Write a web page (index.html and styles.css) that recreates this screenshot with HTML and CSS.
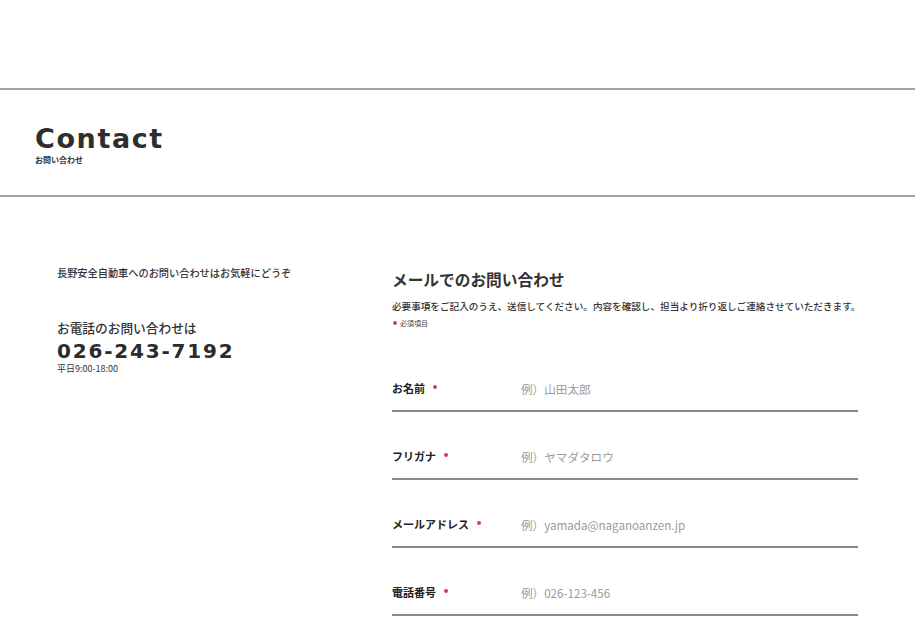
FILE: index.html
```html
<!DOCTYPE html>
<html lang="ja">
<head>
<meta charset="utf-8">
<title>Contact</title>
<link rel="stylesheet" href="styles.css">
</head>
<body>
<header class="site-header"></header>
<section class="hero">
  <h1 class="hero-title">Contact</h1>
  <p class="hero-sub">お問い合わせ</p>
</section>
<main class="contact">
  <div class="contact-info">
    <p class="lead">長野安全自動車へのお問い合わせはお気軽にどうぞ</p>
    <p class="tel-label">お電話のお問い合わせは</p>
    <p class="tel-number">026-243-7192</p>
    <p class="tel-hours">平日9:00-18:00</p>
  </div>
  <div class="contact-form">
    <h2 class="form-title">メールでのお問い合わせ</h2>
    <p class="form-desc">必要事項をご記入のうえ、送信してください。内容を確認し、担当より折り返しご連絡させていただきます。</p>
    <p class="form-note"><span class="req"></span>必須項目</p>
    <form class="form">
      <label class="row">
        <span class="row-label">お名前<span class="req"></span></span>
        <input class="row-input" type="text" placeholder="例）山田太郎">
      </label>
      <label class="row">
        <span class="row-label">フリガナ<span class="req"></span></span>
        <input class="row-input" type="text" placeholder="例）ヤマダタロウ">
      </label>
      <label class="row">
        <span class="row-label">メールアドレス<span class="req"></span></span>
        <input class="row-input" type="text" placeholder="例）yamada@naganoanzen.jp">
      </label>
      <label class="row">
        <span class="row-label">電話番号<span class="req"></span></span>
        <input class="row-input" type="text" placeholder="例）026-123-456">
      </label>
    </form>
  </div>
</main>
</body>
</html>
```
FILE: styles.css
```css
* { box-sizing: border-box; }
html, body { margin: 0; padding: 0; background: #fff; }
body {
  font-family: "Noto Sans CJK JP", "Noto Sans", sans-serif;
  color: #333;
  width: 915px;
  overflow: hidden;
}
p, h1, h2 { margin: 0; }

.site-header { height: 88px; }

.hero {
  border-top: 2px solid #a3a3a3;
  border-bottom: 2px solid #a3a3a3;
  padding: 35px 0 31px 35px;
}
.hero-title {
  font-family: "DejaVu Sans", sans-serif;
  font-weight: 700;
  font-size: 27px;
  line-height: 27px;
  letter-spacing: 1.6px;
  color: #2e2e2e;
}
.hero-sub {
  margin-top: 4px;
  font-size: 8px;
  line-height: 8px;
  font-weight: 700;
  color: #333;
}

.contact {
  display: grid;
  grid-template-columns: 335px 466px;
  padding: 68px 0 0 57px;
}

.lead {
  font-size: 10.2px;
  line-height: 16px;
  font-weight: 500;
  color: #333;
}
.tel-label {
  margin-top: 38px;
  font-size: 12.7px;
  line-height: 18px;
  font-weight: 500;
  color: #333;
}
.tel-number {
  margin-top: 4px;
  font-family: "DejaVu Sans", sans-serif;
  font-weight: 700;
  font-size: 20px;
  line-height: 20px;
  letter-spacing: 1.8px;
  color: #2b2b2b;
}
.tel-hours {
  margin-top: 2px;
  font-size: 9px;
  line-height: 12px;
  color: #333;
}

.form-title {
  margin-top: 3px;
  font-size: 15.7px;
  line-height: 24px;
  font-weight: 700;
  color: #333;
}
.form-desc {
  margin-top: 7px;
  font-size: 9.6px;
  line-height: 14px;
  font-weight: 500;
  color: #333;
  white-space: nowrap;
}
.form-note {
  margin-top: 5px;
  font-size: 7px;
  line-height: 10px;
  color: #444;
  display: flex;
  align-items: center;
}
.form-note .req { margin: 0 3px 0 1px; }

.req {
  display: inline-block;
  width: 4px;
  height: 4px;
  border-radius: 50%;
  background: #d6367b;
  vertical-align: middle;
}

.form { margin-top: 16px; }
.row {
  display: flex;
  align-items: center;
  padding: 33px 0 11px;
  border-bottom: 2px solid #8a8a8a;
  height: 68px;
}
.row-label {
  width: 129px;
  flex: none;
  font-size: 11px;
  line-height: 22px;
  font-weight: 700;
  color: #222;
  display: flex;
  align-items: center;
}
.row-label .req { margin-left: 8px; margin-top: -3px; }
.row-input {
  flex: 1;
  border: 0;
  outline: none;
  padding: 0;
  background: transparent;
  font-family: "Noto Sans CJK JP", "Noto Sans", sans-serif;
  font-size: 11.6px;
  line-height: 22px;
  height: 22px;
  color: #333;
  margin-top: 2px;
}
.row-input::placeholder { color: #9a9a9a; }
```
